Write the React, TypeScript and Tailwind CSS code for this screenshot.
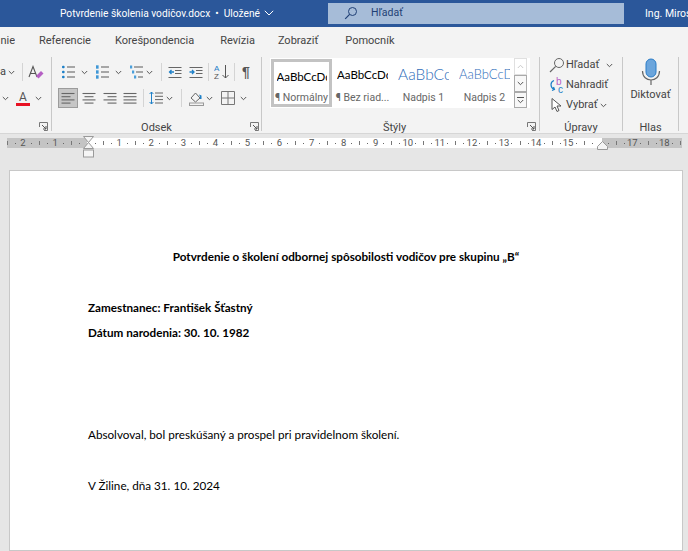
const ui = { fontFamily: '"Roboto", "Noto Sans", sans-serif' };

function Chevron({ className = "" }: { className?: string }) {
  return (
    <svg width="7" height="5" viewBox="0 0 7 5" className={`shrink-0 ${className}`}>
      <path d="M.8 1l2.7 2.7L6.2 1" fill="none" stroke="#555" strokeWidth="1" />
    </svg>
  );
}

function Divider({ className = "" }: { className?: string }) {
  return <div className={`w-px h-[18px] bg-[#d4d4d4] shrink-0 ${className}`} />;
}

function Lines({ widths, align = "left" }: { widths: number[]; align?: "left" | "center" | "right" }) {
  return (
    <svg width="14" height="13" viewBox="0 0 14 13" className="shrink-0">
      {widths.map((w, i) => {
        const x = align === "left" ? 0.5 : align === "right" ? 13.5 - w : 7 - w / 2;
        return <path key={i} d={`M${x} ${1.5 + i * 3.2}h${w}`} stroke="#666" strokeWidth="1.1" />;
      })}
    </svg>
  );
}

function Launcher() {
  return (
    <svg width="9" height="9" viewBox="0 0 9 9" className="shrink-0">
      <path d="M.5 5V.5H8.5V8.5H5" fill="none" stroke="#777" />
      <path d="M3 3l4 4M7 4v3H4" fill="none" stroke="#555" />
    </svg>
  );
}

function Bullets({ kind }: { kind: "dot" | "num" | "multi" }) {
  return (
    <svg width="15" height="14" viewBox="0 0 15 14" className="shrink-0">
      {[2, 7, 12].map((y, i) => (
        <g key={y}>
          {kind === "dot" && <rect x="1" y={y - 1.3} width="2.6" height="2.6" rx="1" fill="#1e80c8" />}
          {kind === "num" && <rect x="1" y={y - 1.7} width="2.6" height="3.4" fill="#3f97d6" />}
          {kind === "multi" && <rect x={1 + i * 2} y={y - 1.5} width="2.2" height="3" fill="#4a9fdb" />}
          <path d={`M${kind === "multi" ? 5 + i * 2 : 6} ${y}H14`} stroke="#666" strokeWidth="1.1" />
        </g>
      ))}
    </svg>
  );
}

function Indent({ out }: { out?: boolean }) {
  return (
    <svg width="14" height="13" viewBox="0 0 14 13" className="shrink-0">
      <path d="M.5 1.5h13M7 4.5h6.5M7 7.5h6.5M.5 11.5h13" stroke="#666" strokeWidth="1.1" />
      <path d={out ? "M6 6H1.5M3.5 4L1.5 6l2 2" : "M.5 6H5M3 4l2 2-2 2"} fill="none" stroke="#1e80c8" strokeWidth="1.3" />
    </svg>
  );
}

function Ruler() {
  const marks: string[] = ["t", "d"];
  // 0 and 16 sit under the margin handles, so they get no number
  const nums = ["2", "1", "", ...Array.from({ length: 18 }, (_, i) => (i === 15 ? "" : String(i + 1)))];
  nums.forEach((n, i) => {
    marks.push(n === "" ? "m" : n);
    if (i < nums.length - 1) marks.push("d", "t", "d");
  });
  marks.push("d", "t");
  return (
    <div className="relative flex h-[10px] w-[675px] ml-[7px]">
      <div className="w-[80px] bg-[#c4c4c4]" />
      <div className="w-[515px] bg-white" />
      <div className="w-[80px] bg-[#c4c4c4]" />
      <div className="absolute left-[-4px] top-0 flex h-[10px]">
        {marks.map((m, i) => (
          <span key={i} className="w-[8.03px] shrink-0 flex items-center justify-center text-[9.5px] leading-[10px] text-[#555]">
            {m === "t" ? <span className="w-px h-[4px] bg-[#777]" /> : m === "d" ? <span className="w-px h-px bg-[#666]" /> : m === "m" ? "" : m}
          </span>
        ))}
      </div>
      {/* margin handles */}
      <svg width="11" height="22" viewBox="0 0 11 22" className="absolute left-[76px] top-[-2px]">
        <path d="M.5.5h10L5.5 6.5zM5.5 6.5l5 6h-10z" fill="#f5f5f5" stroke="#9a9a9a" />
        <rect x=".5" y="14" width="10" height="7" fill="#f5f5f5" stroke="#9a9a9a" />
      </svg>
      <svg width="11" height="9" viewBox="0 0 11 9" className="absolute left-[590px] top-[3px]">
        <path d="M5.5.5l5 5v3H.5v-3z" fill="#f5f5f5" stroke="#9a9a9a" />
      </svg>
    </div>
  );
}

function StyleCell({ preview, label, className }: { preview: string; label: string; className: string }) {
  return (
    <div className="w-[61px] h-[48px] shrink-0 flex flex-col items-center overflow-hidden">
      <div className={`h-[34px] w-[51px] overflow-hidden whitespace-nowrap flex items-center ${className}`} style={{ fontFamily: '"Lato", sans-serif' }}>
        {preview}
      </div>
      <div className="text-[10.5px] leading-[14px] text-[#666] mt-[-1px] whitespace-nowrap">{label}</div>
    </div>
  );
}

export default function App() {
  return (
    <div className="w-[688px] h-[551px] overflow-hidden bg-[#e6e6e6] flex flex-col" style={ui}>
      {/* title bar */}
      <header className="h-[27px] shrink-0 bg-[#2b579a] flex items-center text-white text-[10.5px] whitespace-nowrap">
        <div className="w-[328px] shrink-0 pl-[60px] flex items-center text-[10.2px]">
          <span>Potvrdenie školenia vodičov.docx</span>
          <span className="ml-[5px]">•</span>
          <span className="ml-[5px]">Uložené</span>
          <svg width="10" height="6" viewBox="0 0 10 6" className="ml-[4px]">
            <path d="M.8.8L5 5 9.2.8" fill="none" stroke="#fff" />
          </svg>
        </div>
        <div className="w-[296px] shrink-0 h-[21px] mt-[-1px] bg-[#a6bcd8] flex items-center text-[#1f3f75] pl-[16px]">
          <svg width="14" height="14" viewBox="0 0 14 14">
            <circle cx="8.5" cy="5.5" r="4" fill="none" stroke="#1f3f75" />
            <path d="M5.6 8.4L1.2 12.8" stroke="#1f3f75" strokeWidth="1.2" />
          </svg>
          <span className="ml-[13px]">Hľadať</span>
        </div>
        <span className="ml-[21px]">Ing. Miroslav</span>
      </header>

      {/* tabs */}
      <nav className="h-[28px] shrink-0 bg-[#f3f3f3] flex items-center text-[11px] text-[#444] whitespace-nowrap overflow-hidden">
        <span className="ml-[-1px] w-[16px] overflow-hidden flex justify-end">nie</span>
        <span className="ml-[24px]">Referencie</span>
        <span className="ml-[24px]">Korešpondencia</span>
        <span className="ml-[26px]">Revízia</span>
        <span className="ml-[23px]">Zobraziť</span>
        <span className="ml-[27px]">Pomocník</span>
      </nav>

      {/* ribbon */}
      <section className="h-[79px] shrink-0 bg-[#f3f3f3] border-b border-[#d6d6d6] flex text-[11px] text-[#444] whitespace-nowrap overflow-hidden">
        {/* font group, cut off on the left */}
        <div className="w-[51px] shrink-0 relative">
          <div className="flex items-center h-[18px] mt-[8px]">
            <span className="w-[6px] overflow-hidden flex justify-end">a</span>
            <Chevron className="ml-[2px]" />
            <Divider className="ml-[7px]" />
            <svg width="16" height="15" viewBox="0 0 16 15" className="ml-[5px]">
              <path d="M1 12L5 1.5 9 12M2.5 8.5h5" fill="none" stroke="#555" strokeWidth="1.1" />
              <path d="M8 11l5-5 2.5 2.5-5 5z" fill="#b55fc4" />
            </svg>
          </div>
          <div className="flex items-center h-[20px] mt-[7px]">
            <Chevron className="ml-[2px]" />
            <div className="ml-[7px] w-[14px] flex flex-col items-center">
              <span className="text-[12px] leading-[12px] text-[#555]">A</span>
              <div className="w-[14px] h-[3px] bg-[#e81123]" />
            </div>
            <Chevron className="ml-[5px]" />
          </div>
          <div className="absolute right-[3px] bottom-[2px]">
            <Launcher />
          </div>
        </div>
        <div className="w-px bg-[#c8c8c8] my-[2px] shrink-0" />

        {/* Odsek */}
        <div className="w-[209px] shrink-0 flex flex-col relative">
          <div className="flex items-center h-[18px] mt-[8px] pl-[9px]">
            <Bullets kind="dot" />
            <Chevron className="ml-[5px]" />
            <div className="ml-[7px]"><Bullets kind="num" /></div>
            <Chevron className="ml-[5px]" />
            <div className="ml-[7px]"><Bullets kind="multi" /></div>
            <Chevron className="ml-[2px]" />
            <Divider className="ml-[8px]" />
            <div className="ml-[6px]"><Indent out /></div>
            <div className="ml-[7px]"><Indent /></div>
            <Divider className="ml-[5px]" />
            <svg width="16" height="16" viewBox="0 0 16 16" className="ml-[5px] shrink-0">
              <text x="0" y="7" fontSize="8" fill="#1e80c8" fontFamily="Liberation Sans">A</text>
              <text x="0" y="15" fontSize="8" fill="#555" fontFamily="Liberation Sans">Z</text>
              <path d="M11.5 1v13M8.5 11l3 3 3-3" fill="none" stroke="#555" />
            </svg>
            <Divider className="ml-[4px]" />
            <span className="ml-[7px] text-[14px] font-bold leading-none text-[#555]" style={{ fontFamily: '"Liberation Sans", sans-serif' }}>¶</span>
          </div>
          <div className="flex items-center h-[20px] mt-[7px] pl-[6px]">
            <div className="w-[20px] h-[20px] bg-[#c6c6c6] border border-[#9c9c9c] flex items-center justify-center shrink-0">
              <Lines widths={[13, 9, 13, 9]} />
            </div>
            <div className="ml-[4px]"><Lines widths={[13, 9, 13, 9]} align="center" /></div>
            <div className="ml-[7px]"><Lines widths={[13, 9, 13, 9]} align="right" /></div>
            <div className="ml-[6px]"><Lines widths={[13, 13, 13, 13]} /></div>
            <Divider className="ml-[6px]" />
            <svg width="14" height="14" viewBox="0 0 14 14" className="ml-[5px] shrink-0">
              <path d="M2.5 1v12M.6 3l1.9-2 1.9 2M.6 11l1.9 2 1.9-2" fill="none" stroke="#1e80c8" />
              <path d="M6 2h8M6 5.3h8M6 8.6h8M6 12h8" stroke="#666" />
            </svg>
            <Chevron className="ml-[3px]" />
            <Divider className="ml-[8px]" />
            <svg width="15" height="15" viewBox="0 0 15 15" className="ml-[7px] shrink-0">
              <path d="M2 7l4.5-5L11 7l-4.5 4z" fill="none" stroke="#666" />
              <path d="M10 3.5l2.5 1v3.5h-1.6V5.5z" fill="#1e80c8" />
              <rect x=".5" y="12" width="14" height="2.5" fill="#f3f3f3" stroke="#999" />
            </svg>
            <Chevron className="ml-[2px]" />
            <svg width="14" height="14" viewBox="0 0 14 14" className="ml-[8px] shrink-0">
              <path d="M.5.5h13v13H.5zM7 .5v13M.5 7h13" fill="none" stroke="#777" />
            </svg>
            <Chevron className="ml-[5px]" />
          </div>
          <div className="mt-auto mb-[-1px] h-[12px] relative flex items-center justify-center">Odsek</div>
          <div className="absolute right-[2px] bottom-[2px]"><Launcher /></div>
        </div>
        <div className="w-px bg-[#c8c8c8] my-[2px] shrink-0" />

        {/* Štýly */}
        <div className="w-[277px] shrink-0 flex flex-col relative pl-[8px]">
          <div className="mt-[3px] w-[260px] h-[50px] bg-white flex text-[#222]">
            <div className="w-[61px] h-[48px] mt-[1px] ml-[1px] border-[3px] border-[#c3c3c3] box-border shrink-0 flex flex-col items-center overflow-hidden">
              <div className="h-[31px] w-[50px] overflow-hidden flex items-center text-[11.5px] text-black" style={{ fontFamily: '"Lato", sans-serif' }}>AaBbCcDd</div>
              <div className="text-[10.5px] leading-[12px] text-[#666]">¶ Normálny</div>
            </div>
            <StyleCell preview="AaBbCcDd" label="¶ Bez riad..." className="text-[11.5px] text-black" />
            <StyleCell preview="AaBbCc" label="Nadpis 1" className="text-[15.5px] font-light text-[#2f6eba]" />
            <StyleCell preview="AaBbCcD" label="Nadpis 2" className="text-[13px] font-light text-[#2f6eba]" />
            <div className="w-[13px] ml-[-1px] shrink-0 flex flex-col">
              <div className="h-[17px] border border-[#e0e0e0] flex items-center justify-center rotate-180"><Chevron className="opacity-30" /></div>
              <div className="h-[17px] border border-[#aaa] bg-[#f8f8f8] flex items-center justify-center"><Chevron /></div>
              <div className="h-[16px] border border-[#aaa] bg-[#f8f8f8] flex flex-col items-center justify-center">
                <div className="w-[7px] h-px bg-[#555] mb-[1px]" />
                <Chevron />
              </div>
            </div>
          </div>
          <div className="mt-auto mb-[-1px] h-[12px] flex items-center justify-center pr-[20px]">Štýly</div>
          <div className="absolute right-[3px] bottom-[2px]"><Launcher /></div>
        </div>
        <div className="w-px bg-[#c8c8c8] my-[2px] shrink-0" />

        {/* Úpravy */}
        <div className="w-[82px] shrink-0 flex flex-col pl-[9px]">
          <div className="flex items-center h-[20px]">
            <svg width="16" height="16" viewBox="0 0 16 16" className="shrink-0">
              <circle cx="10" cy="6" r="4.5" fill="none" stroke="#666" />
              <path d="M6.7 9.3L1 15" stroke="#666" strokeWidth="1.2" />
            </svg>
            <span className="ml-[1px]">Hľadať</span>
            <Chevron className="ml-[7px]" />
          </div>
          <div className="flex items-center h-[20px]">
            <svg width="16" height="16" viewBox="0 0 16 16" className="shrink-0">
              <text x="7" y="7.5" fontSize="10" fill="#b55fc4" fontFamily="Liberation Sans">b</text>
              <text x="9" y="15.5" fontSize="10" fill="#1e80c8" fontFamily="Liberation Sans">c</text>
              <path d="M5 3.5C1 5 1 10 5 12.5M3 13.5L5.5 12.5 4.5 10" fill="none" stroke="#1e80c8" strokeWidth="1.2" />
            </svg>
            <span className="ml-[1px]">Nahradiť</span>
          </div>
          <div className="flex items-center h-[20px]">
            <svg width="16" height="16" viewBox="0 0 16 16" className="shrink-0">
              <path d="M3 1.5v11l3-2.5 2 4.5 2-1-2-4.5h4z" fill="#fff" stroke="#555" />
            </svg>
            <span className="ml-[1px]">Vybrať</span>
            <Chevron className="ml-[2px]" />
          </div>
          <div className="mt-auto mb-[-1px] h-[12px] flex items-center justify-center pr-[9px]">Úpravy</div>
        </div>
        <div className="w-px bg-[#c8c8c8] my-[2px] shrink-0" />

        {/* Hlas */}
        <div className="w-[55px] shrink-0 flex flex-col items-center">
          <svg width="20" height="28" viewBox="0 0 20 28" className="mt-[3px]">
            <rect x="5" y="1" width="10" height="18" rx="5" fill="#6ba5dc" stroke="#2a7cc7" />
            <path d="M1.5 13c0 12 17 12 17 0M10 22v5" fill="none" stroke="#666" strokeWidth="1.2" />
          </svg>
          <span className="mt-[1px]">Diktovať</span>
          <span className="mt-auto mb-[-1px] h-[12px] flex items-center">Hlas</span>
        </div>
        <div className="w-px bg-[#c8c8c8] my-[2px] shrink-0" />
      </section>

      {/* ruler */}
      <div className="h-[36px] shrink-0 pt-[4px]">
        <Ruler />
      </div>

      {/* page */}
      <main className="ml-[9px] w-[674px] flex-1 bg-white border border-[#c8c8c8] text-[11.7px] text-black" style={{ fontFamily: '"Lato", sans-serif' }}>
        <p className="mt-[77px] text-center font-bold leading-[16px]">Potvrdenie o školení odbornej spôsobilosti vodičov pre skupinu „B“</p>
        <p className="mt-[35px] ml-[78px] font-bold leading-[16px]">Zamestnanec: František Šťastný</p>
        <p className="mt-[9px] ml-[78px] font-bold leading-[16px]">Dátum narodenia: 30. 10. 1982</p>
        <p className="mt-[86px] ml-[78px] leading-[16px]">Absolvoval, bol preskúšaný a prospel pri pravidelnom školení.</p>
        <p className="mt-[35px] ml-[78px] leading-[16px]">V Žiline, dňa 31. 10. 2024</p>
      </main>
    </div>
  );
}
